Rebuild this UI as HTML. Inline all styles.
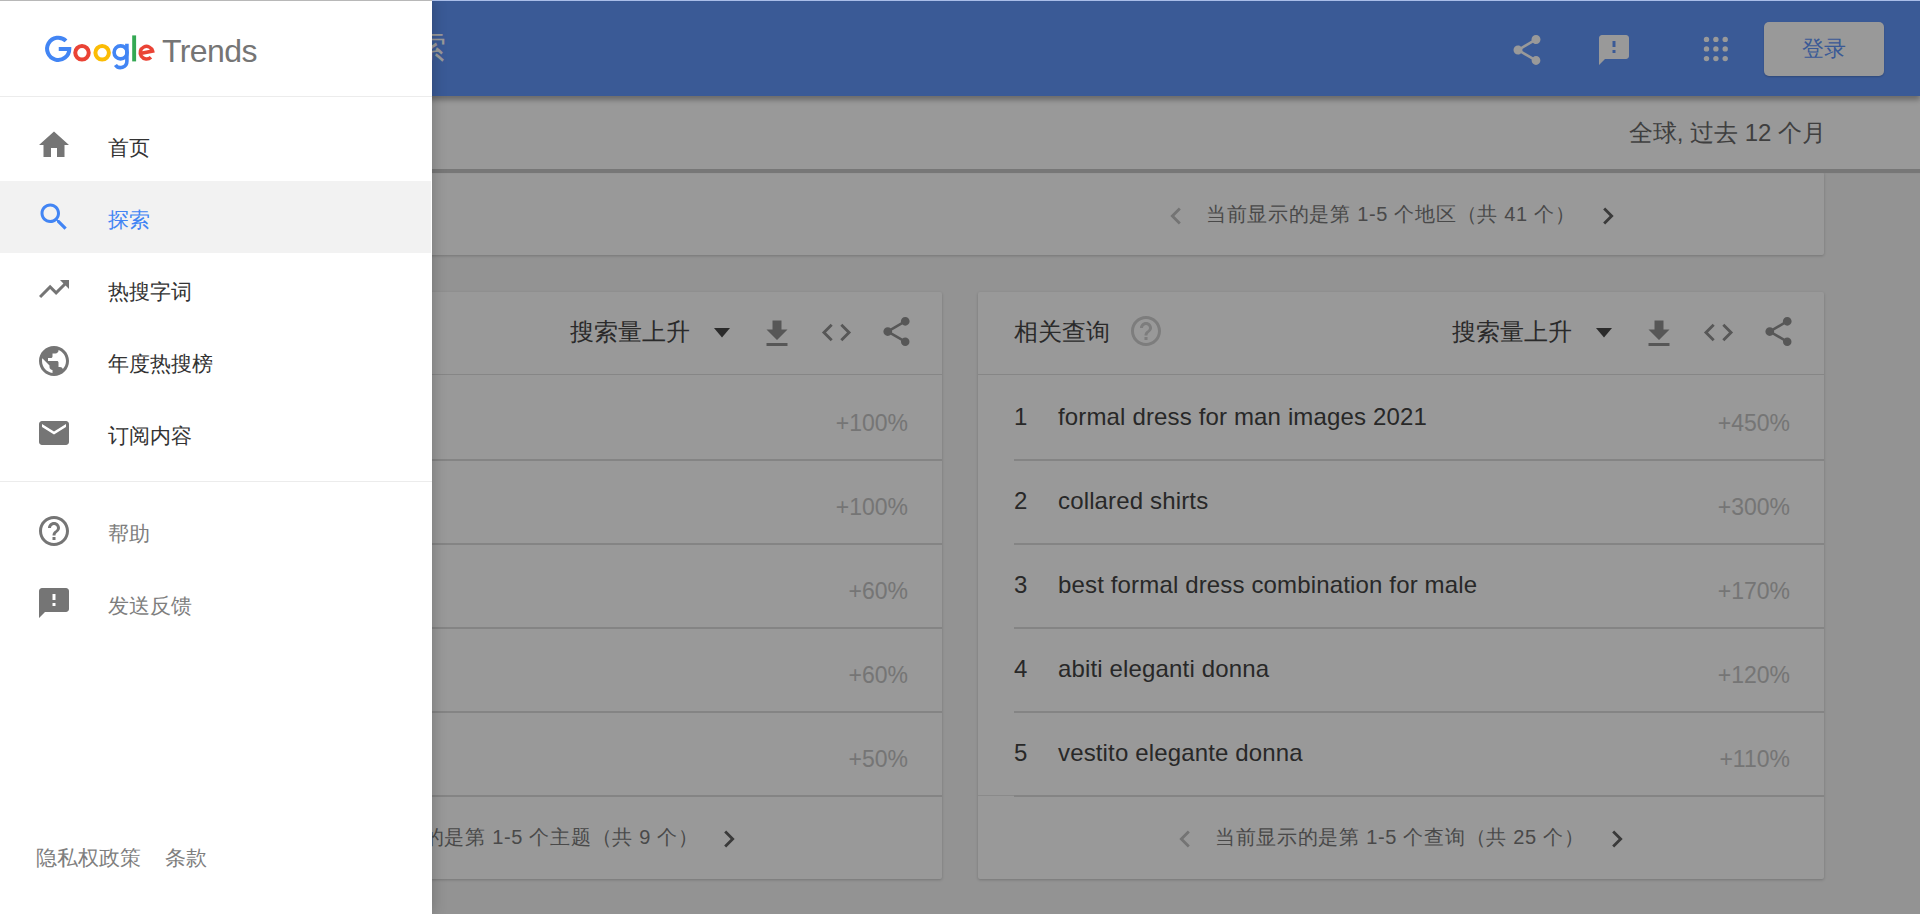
<!DOCTYPE html>
<html><head><meta charset="utf-8">
<style>
*{box-sizing:border-box;margin:0;padding:0}
html,body{width:1920px;height:914px;overflow:hidden;background:#f5f5f5;font-family:"Liberation Sans",sans-serif}
.abs{position:absolute}
.t{position:absolute;white-space:nowrap;line-height:1}
svg{position:absolute;display:block}
#hdr{left:0;top:0;width:1920px;height:96px;background:#6296fa;box-shadow:0 4px 5px rgba(0,0,0,.3);z-index:2}
#sub{left:0;top:96px;width:1920px;height:73px;background:#fff;z-index:1}
#subline{left:0;top:169px;width:1920px;height:4px;background:#c6c6c6;z-index:1;box-shadow:0 0 1px rgba(0,0,0,.2)}
.card{position:absolute;background:#fff;border-radius:2px;box-shadow:0 1px 3px rgba(0,0,0,.2)}
#overlay{left:0;top:0;width:1920px;height:914px;background:rgba(0,0,0,.4);z-index:5}
#drawer{left:0;top:0;width:432px;height:914px;background:#fff;box-shadow:0 0 14px rgba(0,0,0,.24);z-index:6}
.ico{fill:#757575}
.cic{fill:#929292}
.row{position:absolute;left:36px;right:0;height:84px}
.rl{position:absolute;left:36px;right:0;height:2px;background:#dcdcdc}
.num{font-size:24px;color:#444}
.qt{font-size:24px;color:#444;letter-spacing:0.15px}
.val{font-size:23px;color:#c4c4c4;text-align:right}
.pg{font-size:20px;color:#7a7a7a;letter-spacing:0.7px}
</style></head><body>
<!-- ============ page ============ -->
<div id="hdr" class="abs">
  <div class="t" style="left:382px;top:31px;font-size:32px;color:#fff">探索</div>
  <!-- share -->
  <svg style="left:1509px;top:32px" width="36" height="36" viewBox="0 0 24 24"><path fill="#fff" d="M18 16.08c-.76 0-1.44.3-1.96.77L8.91 12.7c.05-.23.09-.46.09-.7s-.04-.47-.09-.7l7.05-4.11c.54.5 1.25.81 2.04.81 1.66 0 3-1.34 3-3s-1.34-3-3-3-3 1.34-3 3c0 .24.04.47.09.7L8.04 9.81C7.5 9.31 6.79 9 6 9c-1.66 0-3 1.34-3 3s1.34 3 3 3c.79 0 1.5-.31 2.04-.81l7.12 4.16c-.05.21-.08.43-.08.65 0 1.61 1.31 2.92 2.92 2.92 1.61 0 2.92-1.31 2.92-2.92s-1.31-2.92-2.92-2.92z"/></svg>
  <!-- feedback -->
  <svg style="left:1596px;top:32px" width="36" height="36" viewBox="0 0 24 24"><path fill="#fff" d="M20 2H4c-1.1 0-1.99.9-1.99 2L2 22l4-4h14c1.1 0 2-.9 2-2V4c0-1.1-.9-2-2-2zm-7 12h-2v-2h2v2zm0-4h-2V6h2v4z"/></svg>
  <!-- apps -->
  <svg style="left:1700px;top:33px" width="32" height="32" viewBox="0 0 32 32"><g fill="#fff">
    <circle cx="6.5" cy="6.4" r="2.7"/><circle cx="15.9" cy="6.4" r="2.7"/><circle cx="25.2" cy="6.4" r="2.7"/>
    <circle cx="6.5" cy="15.9" r="2.7"/><circle cx="15.9" cy="15.9" r="2.7"/><circle cx="25.2" cy="15.9" r="2.7"/>
    <circle cx="6.5" cy="25.6" r="2.7"/><circle cx="15.9" cy="25.6" r="2.7"/><circle cx="25.2" cy="25.6" r="2.7"/>
  </g></svg>
  <div class="abs" style="left:1764px;top:22px;width:120px;height:54px;background:#fff;border-radius:5px;box-shadow:0 1px 2px rgba(0,0,0,.2)">
    <div class="t" style="left:38px;top:16px;font-size:22px;color:#6296fa">登录</div>
  </div>
</div>
<div id="subline" class="abs"></div>
<div id="sub" class="abs">
  <div class="t" style="right:94px;top:25px;font-size:24px;color:#6a6a6a">全球, 过去 12 个月</div>
</div>

<!-- map card bottom -->
<div class="card" style="left:96px;top:172px;width:1728px;height:83px">
  <svg style="left:1063px;top:27px" width="34" height="34" viewBox="0 0 24 24"><path fill="#c2c2c2" d="M15.41 7.41L14 6l-6 6 6 6 1.41-1.41L10.83 12z"/></svg>
  <div class="t pg" style="left:1110px;top:32px">当前显示的是第 1-5 个地区（共 41 个）</div>
  <svg style="left:1495px;top:27px" width="34" height="34" viewBox="0 0 24 24"><path fill="#616161" d="M10 6L8.59 7.41 13.17 12l-4.58 4.59L10 18l6-6z"/></svg>
</div>

<!-- left card -->
<div class="card" style="left:96px;top:292px;width:846px;height:587px">
  <div class="t" style="left:474px;top:28px;font-size:24px;color:#474747">搜索量上升</div>
  <svg style="left:618px;top:36px" width="16" height="10" viewBox="0 0 16 10"><path fill="#484848" d="M0 0h16L8 9.5z"/></svg>
  <svg style="left:663px;top:24px" width="36" height="36" viewBox="0 0 24 24"><path class="cic" d="M19 9h-4V3H9v6H5l7 7 7-7zM5 18v2h14v-2H5z"/></svg>
  <svg style="left:723px;top:23px" width="35" height="35" viewBox="0 0 24 24"><path class="cic" d="M9.4 16.6L4.8 12l4.6-4.6L8 6l-6 6 6 6 1.4-1.4zm5.2 0l4.6-4.6-4.6-4.6L16 6l6 6-6 6-1.4-1.4z"/></svg>
  <svg style="left:783px;top:22px" width="35" height="35" viewBox="0 0 24 24"><path class="cic" d="M18 16.08c-.76 0-1.44.3-1.96.77L8.91 12.7c.05-.23.09-.46.09-.7s-.04-.47-.09-.7l7.05-4.11c.54.5 1.25.81 2.04.81 1.66 0 3-1.34 3-3s-1.34-3-3-3-3 1.34-3 3c0 .24.04.47.09.7L8.04 9.81C7.5 9.31 6.79 9 6 9c-1.66 0-3 1.34-3 3s1.34 3 3 3c.79 0 1.5-.31 2.04-.81l7.12 4.16c-.05.21-.08.43-.08.65 0 1.61 1.31 2.92 2.92 2.92 1.61 0 2.92-1.31 2.92-2.92s-1.31-2.92-2.92-2.92z"/></svg>
  <div class="abs" style="left:0;top:82px;width:846px;height:1px;background:#e0e0e0"></div>
  <div class="row" style="top:83px"><div class="t val" style="right:34px;top:37px">+100%</div></div>
  <div class="row" style="top:167px"><div class="t val" style="right:34px;top:37px">+100%</div></div>
  <div class="row" style="top:251px"><div class="t val" style="right:34px;top:37px">+60%</div></div>
  <div class="row" style="top:335px"><div class="t val" style="right:34px;top:37px">+60%</div></div>
  <div class="row" style="top:419px"><div class="t val" style="right:34px;top:37px">+50%</div></div>
  <div class="rl" style="top:167px"></div><div class="rl" style="top:251px"></div><div class="rl" style="top:335px"></div><div class="rl" style="top:419px"></div><div class="rl" style="top:503px"></div>
  <div class="abs" style="left:0;top:503px;width:36px;height:1px;background:#e6e6e6"></div>
  <svg style="left:205px;top:530px" width="34" height="34" viewBox="0 0 24 24"><path fill="#c2c2c2" d="M15.41 7.41L14 6l-6 6 6 6 1.41-1.41L10.83 12z"/></svg>
  <div class="t pg" style="left:245px;top:535px">当前显示的是第 1-5 个主题（共 9 个）</div>
  <svg style="left:616px;top:530px" width="34" height="34" viewBox="0 0 24 24"><path fill="#616161" d="M10 6L8.59 7.41 13.17 12l-4.58 4.59L10 18l6-6z"/></svg>
</div>

<!-- right card -->
<div class="card" style="left:978px;top:292px;width:846px;height:587px">
  <div class="t" style="left:36px;top:28px;font-size:24px;color:#474747">相关查询</div>
  <svg style="left:150px;top:21px" width="36" height="36" viewBox="0 0 24 24"><path fill="#d0d0d0" d="M11 18h2v-2h-2v2zm1-16C6.48 2 2 6.48 2 12s4.48 10 10 10 10-4.48 10-10S17.52 2 12 2zm0 18c-4.41 0-8-3.59-8-8s3.590-8 8-8 8 3.59 8 8-3.59 8-8 8zm0-14c-2.21 0-4 1.79-4 4h2c0-1.100.9-2 2-2s2 .9 2 2c0 2-3 1.75-3 5h2c0-2.25 3-2.5 3-5 0-2.21-1.79-4-4-4z"/></svg>
  <div class="t" style="left:474px;top:28px;font-size:24px;color:#474747">搜索量上升</div>
  <svg style="left:618px;top:36px" width="16" height="10" viewBox="0 0 16 10"><path fill="#484848" d="M0 0h16L8 9.5z"/></svg>
  <svg style="left:663px;top:24px" width="36" height="36" viewBox="0 0 24 24"><path class="cic" d="M19 9h-4V3H9v6H5l7 7 7-7zM5 18v2h14v-2H5z"/></svg>
  <svg style="left:723px;top:23px" width="35" height="35" viewBox="0 0 24 24"><path class="cic" d="M9.4 16.6L4.8 12l4.6-4.6L8 6l-6 6 6 6 1.4-1.4zm5.2 0l4.6-4.6-4.6-4.6L16 6l6 6-6 6-1.4-1.4z"/></svg>
  <svg style="left:783px;top:22px" width="35" height="35" viewBox="0 0 24 24"><path class="cic" d="M18 16.08c-.76 0-1.44.3-1.96.77L8.91 12.7c.05-.23.09-.46.09-.7s-.04-.47-.09-.7l7.05-4.11c.54.5 1.25.81 2.04.81 1.66 0 3-1.34 3-3s-1.34-3-3-3-3 1.34-3 3c0 .24.04.47.09.7L8.04 9.81C7.5 9.31 6.79 9 6 9c-1.66 0-3 1.34-3 3s1.34 3 3 3c.79 0 1.5-.31 2.04-.81l7.12 4.16c-.05.21-.08.43-.08.65 0 1.61 1.31 2.92 2.92 2.920 1.61 0 2.92-1.31 2.92-2.92s-1.31-2.92-2.92-2.92z"/></svg>
  <div class="abs" style="left:0;top:82px;width:846px;height:1px;background:#e0e0e0"></div>
  <div class="row" style="top:83px"><div class="t num" style="left:0;top:30px">1</div><div class="t qt" style="left:44px;top:30px">formal dress for man images 2021</div><div class="t val" style="right:34px;top:37px">+450%</div></div>
  <div class="row" style="top:167px"><div class="t num" style="left:0;top:30px">2</div><div class="t qt" style="left:44px;top:30px">collared shirts</div><div class="t val" style="right:34px;top:37px">+300%</div></div>
  <div class="row" style="top:251px"><div class="t num" style="left:0;top:30px">3</div><div class="t qt" style="left:44px;top:30px">best formal dress combination for male</div><div class="t val" style="right:34px;top:37px">+170%</div></div>
  <div class="row" style="top:335px"><div class="t num" style="left:0;top:30px">4</div><div class="t qt" style="left:44px;top:30px">abiti eleganti donna</div><div class="t val" style="right:34px;top:37px">+120%</div></div>
  <div class="row" style="top:419px"><div class="t num" style="left:0;top:30px">5</div><div class="t qt" style="left:44px;top:30px">vestito elegante donna</div><div class="t val" style="right:34px;top:37px">+110%</div></div>
  <div class="rl" style="top:167px"></div><div class="rl" style="top:251px"></div><div class="rl" style="top:335px"></div><div class="rl" style="top:419px"></div><div class="rl" style="top:503px"></div>
  <div class="abs" style="left:0;top:503px;width:36px;height:1px;background:#e6e6e6"></div>
  <svg style="left:190px;top:530px" width="34" height="34" viewBox="0 0 24 24"><path fill="#c2c2c2" d="M15.41 7.41L14 6l-6 6 6 6 1.41-1.41L10.83 12z"/></svg>
  <div class="t pg" style="left:237px;top:535px">当前显示的是第 1-5 个查询（共 25 个）</div>
  <svg style="left:622px;top:530px" width="34" height="34" viewBox="0 0 24 24"><path fill="#616161" d="M10 6L8.59 7.41 13.17 12l-4.58 4.59L10 18l6-6z"/></svg>
</div>

<div id="overlay" class="abs"></div>

<!-- ============ drawer ============ -->
<div id="drawer" class="abs">
  <svg style="left:0;top:0" width="170" height="80" viewBox="0 0 170 80"><g fill="none">
    <path stroke="#4285f4" stroke-width="4" d="M65.98 40.92A11.1 11.1 0 1 0 69.3 48.9H58.75"/>
    <circle stroke="#ea4335" stroke-width="4" cx="82" cy="52.8" r="6.75"/>
    <circle stroke="#fbbc05" stroke-width="4" cx="102.15" cy="52.8" r="6.75"/>
    <circle stroke="#4285f4" stroke-width="3.6" cx="120.6" cy="52.4" r="6.5"/>
    <path stroke="#4285f4" stroke-width="3.6" d="M126.9 43.8V61.3A6.3 6.3 0 0 1 115.44 64.91"/>
    <path stroke="#ea4335" stroke-width="3.5" d="M140.26 53.58L152.59 51.07A6.3 6.3 0 1 0 150.95 57.15"/>
  </g><rect fill="#34a853" x="132.2" y="35.4" width="3.9" height="26"/></svg>
  <div class="t" style="left:162px;top:35px;font-size:32px;letter-spacing:-0.6px;color:#757575">Trends</div>
  <div class="abs" style="left:0;top:96px;width:432px;height:1px;background:#ececec"></div>

  <!-- home -->
  <svg style="left:36px;top:127px" width="36" height="36" viewBox="0 0 24 24"><path class="ico" d="M10 20v-6h4v6h5v-8h3L12 3 2 12h3v8z"/></svg>
  <div class="t" style="left:108px;top:137px;font-size:21px;color:#333">首页</div>
  <!-- explore active -->
  <div class="abs" style="left:0;top:181px;width:431px;height:72px;background:#f2f2f2"></div>
  <svg style="left:36px;top:199px" width="36" height="36" viewBox="0 0 24 24"><path fill="#4285f4" d="M15.5 14h-.79l-.28-.27C15.41 12.59 16 11.11 16 9.5 16 5.91 13.09 3 9.5 3S3 5.91 3 9.5 5.91 16 9.5 16c1.61 0 3.09-.59 4.230-1.57l.27.28v.79l5 4.99L20.49 19l-4.99-5zm-6 0C7.01 14 5 11.99 5 9.5S7.01 5 9.5 5 14 7.01 14 9.5 11.99 14 9.5 14z"/></svg>
  <div class="t" style="left:108px;top:209px;font-size:21px;color:#4285f4">探索</div>
  <!-- trending -->
  <svg style="left:36px;top:271px" width="36" height="36" viewBox="0 0 24 24"><path class="ico" d="M16 6l2.29 2.29-4.88 4.88-4-4L2 16.59 3.41 18l6-6 4 4 6.3-6.29L22 12V6z"/></svg>
  <div class="t" style="left:108px;top:281px;font-size:21px;color:#333">热搜字词</div>
  <!-- globe -->
  <svg style="left:36px;top:343px" width="36" height="36" viewBox="0 0 24 24"><path class="ico" d="M12 2C6.48 2 2 6.48 2 12s4.48 10 10 10 10-4.48 10-10S17.52 2 12 2zm-1 17.93c-3.95-.49-7-3.85-7-7.93 0-.62.08-1.21.21-1.79L9 15v1c0 1.1.9 2 2 2v1.93zm6.9-2.54c-.26-.81-1-1.39-1.9-1.39h-1v-3c0-.55-.45-1-1-1H8v-2h2c.55 0 1-.45 1-1V7h2c1.1 0 2-.9 2-2v-.41c2.930 1.19 5 4.06 5 7.41 0 2.08-.8 3.97-2.1 5.39z"/></svg>
  <div class="t" style="left:108px;top:353px;font-size:21px;color:#333">年度热搜榜</div>
  <!-- mail -->
  <svg style="left:36px;top:415px" width="36" height="36" viewBox="0 0 24 24"><path class="ico" d="M20 4H4c-1.1 0-1.99.9-1.99 2L2 18c0 1.1.9 2 2 2h16c1.1 0 2-.9 2-2V6c0-1.1-.9-2-2-2zm0 4l-8 5-8-5V6l8 5 8-5v2z"/></svg>
  <div class="t" style="left:108px;top:425px;font-size:21px;color:#333">订阅内容</div>
  <div class="abs" style="left:0;top:481px;width:432px;height:1px;background:#ececec"></div>
  <!-- help -->
  <svg style="left:36px;top:513px" width="36" height="36" viewBox="0 0 24 24"><path class="ico" d="M11 18h2v-2h-2v2zm1-16C6.48 2 2 6.48 2 12s4.48 10 10 10 10-4.48 10-10S17.52 2 12 2zm0 18c-4.41 0-8-3.59-8-8s3.59-8 8-8 8 3.59 8 8-3.59 8-8 8zm0-14c-2.21 0-4 1.79-4 4h2c0-1.1.9-2 2-2s2 .9 2 2c0 2-3 1.75-3 5h2c0-2.25 3-2.5 3-5 0-2.21-1.79-4-4-4z"/></svg>
  <div class="t" style="left:108px;top:523px;font-size:21px;color:#7e7e7e">帮助</div>
  <!-- feedback -->
  <svg style="left:36px;top:585px" width="36" height="36" viewBox="0 0 24 24"><path class="ico" d="M20 2H4c-1.1 0-1.99.9-1.99 2L2 22l4-4h14c1.1 0 2-.9 2-2V4c0-1.1-.9-2-2-2zm-7 12h-2v-2h2v2zm0-4h-2V6h2v4z"/></svg>
  <div class="t" style="left:108px;top:595px;font-size:21px;color:#7e7e7e">发送反馈</div>

  <div class="t" style="left:36px;top:847px;font-size:21px;color:#7e7e7e">隐私权政策</div>
  <div class="t" style="left:165px;top:847px;font-size:21px;color:#7e7e7e">条款</div>
</div>
<div class="abs" style="left:0;top:0;width:432px;height:1px;background:#b8b8b8;z-index:7"></div>
<div class="abs" style="left:432px;top:0;width:1488px;height:1px;background:#a9bde8;z-index:7"></div>
</body></html>
